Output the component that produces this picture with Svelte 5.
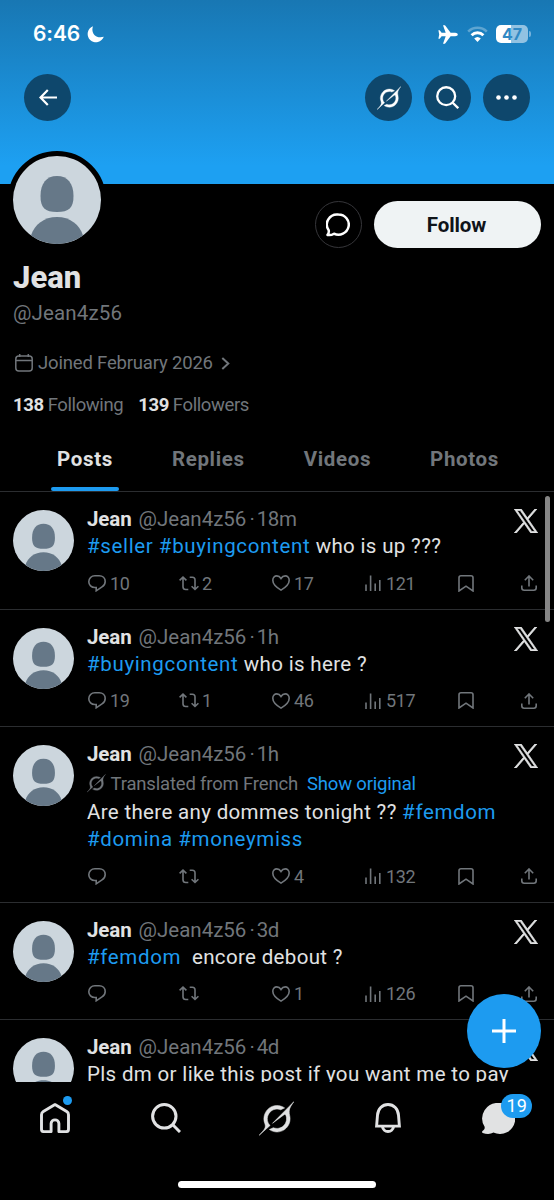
<script lang="ts">
	type Part = { text: string; tag?: boolean };
	type Post = {
		age: string;
		translated?: boolean;
		body: Part[];
		replies?: string;
		reposts?: string;
		likes?: string;
		views?: string;
	};

	const tabs = ['Posts', 'Replies', 'Videos', 'Photos'];
	let activeTab = $state('Posts');

	const posts: Post[] = [
		{
			age: '18m',
			body: [
				{ text: '#seller', tag: true },
				{ text: ' ' },
				{ text: '#buyingcontent', tag: true },
				{ text: ' who is up ???' },
			],
			replies: '10',
			reposts: '2',
			likes: '17',
			views: '121',
		},
		{
			age: '1h',
			body: [{ text: '#buyingcontent', tag: true }, { text: ' who is here ?' }],
			replies: '19',
			reposts: '1',
			likes: '46',
			views: '517',
		},
		{
			age: '1h',
			translated: true,
			body: [
				{ text: 'Are there any dommes tonight ?? ' },
				{ text: '#femdom', tag: true },
				{ text: '\n' },
				{ text: '#domina', tag: true },
				{ text: ' ' },
				{ text: '#moneymiss', tag: true },
			],
			likes: '4',
			views: '132',
		},
		{
			age: '3d',
			body: [{ text: '#femdom', tag: true }, { text: '  encore debout ?' }],
			likes: '1',
			views: '126',
		},
		{
			age: '4d',
			body: [{ text: 'Pls dm or like this post if you want me to pay' }],
		},
	];
</script>

{#snippet grok(size: number)}
	<svg width={size} height={size} viewBox="0 0 33 32" fill="currentColor" stroke="currentColor" stroke-width=".5">
		<path
			d="M12.745 20.54l10.97-8.19c.539-.4 1.307-.244 1.564.38 1.349 3.288.746 7.241-1.938 9.955-2.683 2.714-6.417 3.31-9.83 1.954l-3.728 1.745c5.347 3.697 11.84 2.782 15.898-1.324 3.219-3.255 4.216-7.692 3.284-11.693l.008.009c-1.351-5.878.332-8.227 3.782-13.031L33 0l-4.54 4.59v-.014L12.743 20.544m-2.263 1.987c-3.837-3.707-3.175-9.446.1-12.755 2.42-2.449 6.388-3.448 9.852-1.979l3.72-1.737c-.67-.49-1.53-1.017-2.515-1.387-4.455-1.854-9.789-.931-13.41 2.728-3.483 3.523-4.579 8.94-2.697 13.561 1.405 3.454-.899 5.898-3.22 8.364C1.49 30.2.666 31.074 0 32l10.478-9.466"
		/>
	</svg>
{/snippet}

{#snippet person(size: number)}
	<svg class="person" width={size} height={size} viewBox="0 0 88 88">
		<circle cx="44" cy="44" r="44" fill="#ccd6dd" />
		<path
			d="M44 20c10.500 0 16.500 7.500 16.500 20C60.500 52 56 56 44 56S27.500 52 27.500 40C27.500 27.500 33.500 20 44 20z"
			fill="#667888"
		/>
		<path d="M18 79.500C21.500 68.500 31 61 44 61s22.500 7.500 26 18.500A44 44 0 0 1 18 79.500z" fill="#667888" />
	</svg>
{/snippet}

{#snippet search(size: number, weight: number)}
	<svg width={size} height={size} viewBox="0 0 30 30" fill="none" stroke="currentColor" stroke-width={weight}>
		<circle cx="13.300" cy="13.300" r="11.700" />
		<path d="M21.800 21.800l7.200 7.200" />
	</svg>
{/snippet}

<div class="screen">
	<header class="banner">
		<div class="status">
			<span class="clock">6:46</span>
			<svg class="moon" width="17" height="17" viewBox="0 0 17 17" fill="#fff">
				<path d="M6 .2A8.300 8.300 0 1 0 16.800 10.700C13 11.800 9.500 11 7.400 8.900 5.200 6.600 4.900 3.200 6 .2z" />
			</svg>
			<div class="signals">
				<svg width="20" height="19" viewBox="0 0 20 19" fill="#fff">
					<path
						d="M19.800 9.500c0-1-1.200-1.700-2.600-1.700h-4.600L7.400.8C7 .3 6.700.2 6.200.2H5l2.700 7.600H3.600L1.700 5.300H.4l.8 4.200-.8 4.200h1.300l1.900-2.500h4.100L5 18.800h1.200c.5 0 .8-.1 1.200-.6l5.200-7h4.600c1.400 0 2.600-.7 2.600-1.700z"
					/>
				</svg>
				<svg width="21" height="16" viewBox="0 0 21 16" fill="none" stroke="#fff">
					<path d="M1.200 5.600a13.300 13.300 0 0 1 18.600 0" stroke-width="2.600" opacity=".3" />
					<path d="M4.600 9.200a8.400 8.400 0 0 1 11.800 0" stroke-width="2.900" />
					<path d="M10.500 16l-3.300-3.500a4.800 4.800 0 0 1 6.600 0z" fill="#fff" stroke="none" />
				</svg>
				<div class="battery">47</div>
				<i class="nub"></i>
			</div>
		</div>
		<nav class="controls">
			<button type="button" class="round" aria-label="Back">
				<svg width="18" height="17" viewBox="0 0 18 17" fill="none" stroke="currentColor" stroke-width="2.200">
					<path d="M8.800 1L1.500 8.500l7.300 7.500M1.700 8.500H18" />
				</svg>
			</button>
			<span class="spacer"></span>
			<button type="button" class="round" aria-label="Grok">{@render grok(24)}</button>
			<button type="button" class="round" aria-label="Search">{@render search(23, 3)}</button>
			<button type="button" class="round" aria-label="More">
				<svg width="21" height="5" viewBox="0 0 21 5" fill="currentColor">
					<circle cx="2.500" cy="2.500" r="2.300" /><circle cx="10.500" cy="2.500" r="2.300" /><circle cx="18.500" cy="2.500" r="2.300" />
				</svg>
			</button>
		</nav>
	</header>

	<section class="profile">
		<div class="top">
			<div class="portrait">{@render person(88)}</div>
			<span class="spacer"></span>
			<button type="button" class="message" aria-label="Message">
				<svg width="24" height="24" viewBox="0 0 24 24" fill="none" stroke="currentColor" stroke-width="2.500" stroke-linejoin="round">
					<path d="M12.400 1.500a10.300 10.100 0 1 1-4.400 19.200c-2 1.200-4.300 1.600-6.500 1.200 1.300-1.400 1.500-2.900 1.200-4.600A10.300 10.100 0 0 1 12.400 1.500z" />
				</svg>
			</button>
			<button type="button" class="follow">Follow</button>
		</div>
		<h1>Jean</h1>
		<p class="handle">@Jean4z56</p>
		<p class="joined">
			<svg width="18" height="18" viewBox="0 0 18 18" fill="none" stroke="currentColor" stroke-width="1.500">
				<rect x=".8" y="2" width="16.400" height="15" rx="3" />
				<path d="M1 6.500h16M4.700 0v3M13.300 0v3" />
			</svg>
			<span>Joined February 2026</span>
			<svg class="chevron" width="9" height="13" viewBox="0 0 9 13" fill="none" stroke="currentColor" stroke-width="2">
				<path d="M1.300 1l6 5.500-6 5.500" />
			</svg>
		</p>
		<p class="counts">
			<b>138</b><span class="following">Following</span>
			<b>139</b><span class="followers">Followers</span>
		</p>
	</section>

	<nav class="tabs">
		{#each tabs as tab}
			<button type="button" class:active={tab === activeTab} onclick={() => (activeTab = tab)}>{tab}</button>
		{/each}
	</nav>

	<main class="feed">
		{#each posts as post}
			<article>
				{@render person(61)}
				<div class="content">
					<div class="byline">
						<b>Jean</b><span class="user">@Jean4z56</span><span class="sep">·</span><span class="age">{post.age}</span>
					</div>
					{#if post.translated}
						<div class="translated">
							{@render grok(18.500)}
							<span>Translated from French</span>
							<a href="#original">Show original</a>
						</div>
					{/if}
					<div class="body">{#each post.body as part}{#if part.tag}<span class="tag">{part.text}</span>{:else}{part.text}{/if}{/each}</div>
					<div class="actions">
						<span class="reply">
							<svg width="18" height="17" viewBox="0 0 18 17">
								<path d="M6.800.8h4.400c3.500 0 6 2.500 6 5.700 0 2.300-1.200 4.200-3.200 5.400l-5.800 3.900v-3.300H6.800C3.400 12.500.8 10 .8 6.700S3.400.8 6.800.8z" />
							</svg>
							{post.replies ?? ''}
						</span>
						<span class="repost">
							<svg width="20" height="15" viewBox="0 0 20 15">
								<path d="M.6 4.400L4 1.100l3.400 3.300M4 1.500v9.300c0 1.700.8 2.700 2.700 2.700h2.600M19.400 10.200L16 13.500l-3.400-3.300M16 13.200V4c0-1.700-.8-2.700-2.700-2.700h-2.600" />
							</svg>
							{post.reposts ?? ''}
						</span>
						<span class="like">
							<svg width="18" height="16" viewBox="0 0 18 16">
								<path d="M9 15.100C4.500 12.400.8 8.900.8 5.200.8 2.700 2.600.9 4.800.9 6.600.9 8 1.900 9 3.500 10 1.900 11.400.9 13.200.9c2.200 0 4 1.800 4 4.300 0 3.700-3.700 7.200-8.200 9.900z" />
							</svg>
							{post.likes ?? ''}
						</span>
						<span class="views">
							<svg width="16" height="16" viewBox="0 0 16 16">
								<path d="M1 16V9.500M5.600 16V.5M10.200 16V8.500M14.800 16V5" />
							</svg>
							{post.views ?? ''}
						</span>
						<span class="bookmark">
							<svg width="16" height="17" viewBox="0 0 16 17">
								<path d="M1 16V2.800C1 1.600 1.700.8 3 .8h10c1.300 0 2 .8 2 2V16l-7-4.800z" />
							</svg>
						</span>
						<span class="share">
							<svg width="16" height="16" viewBox="0 0 16 16">
								<path d="M8 11.500V1.200M3.800 5.200L8 1l4.200 4.200M.8 10.500v2.300c0 1.600.8 2.400 2.400 2.400h9.600c1.600 0 2.400-.8 2.400-2.400v-2.300" />
							</svg>
						</span>
					</div>
				</div>
				<svg class="xmark" width="24" height="24" viewBox="0 0 1200 1227" fill="currentColor">
					<path
						d="M714.163 519.284L1160.890 0H1055.030L667.137 450.887L357.328 0H0L468.492 681.821L0 1226.370H105.866L515.491 750.218L842.672 1226.370H1200L714.137 519.284ZM569.165 687.828L521.697 619.934L144.011 79.694H306.615L611.412 515.685L658.880 583.579L1055.080 1150.300H892.476L569.165 687.854Z"
						stroke="currentColor"
						stroke-width="36"
					/>
				</svg>
			</article>
		{/each}
	</main>

	<i class="scrollbar"></i>
	<button type="button" class="compose" aria-label="New post">
		<svg width="24" height="24" viewBox="0 0 24 24" fill="none" stroke="#fff" stroke-width="3">
			<path d="M12 0v24M0 12h24" />
		</svg>
	</button>

	<footer>
		<div class="dock">
			<span>
				<svg width="30" height="30" viewBox="0 0 30 30" fill="none" stroke="currentColor" stroke-width="2.900" stroke-linejoin="round">
					<path d="M15 1.600L3.300 8.600C2 9.400 1.500 10.300 1.500 11.800v14.400c0 1.600.9 2.400 2.500 2.400h7.100v-8c0-5 7.800-5 7.800 0v8H26c1.600 0 2.500-.8 2.500-2.400V11.800c0-1.500-.5-2.400-1.800-3.200z" />
				</svg>
				<i class="dot"></i>
			</span>
			<span>{@render search(30, 3)}</span>
			<span>{@render grok(35)}</span>
			<span>
				<svg width="28" height="30" viewBox="0 0 28 30" fill="none" stroke="currentColor" stroke-width="2.900">
					<path d="M3.500 12.200C3.900 6 8.200 1.500 14 1.500S24.100 6 24.500 12.200l.9 10.900H2.600zM8.300 23.500c.8 3.300 2.900 5 5.700 5s4.900-1.700 5.700-5" />
				</svg>
			</span>
			<span>
				<svg width="33" height="31" viewBox="0 0 33 31" fill="currentColor">
					<path d="M17 0a15.500 15.500 0 1 1-5.600 29.600c-2.600 1.600-7 1.700-10.700.3-.8-.3-.9-1.200-.2-1.800 1.800-1.500 2.600-2.800 2-4.600A15.500 15.500 0 0 1 17 0z" />
				</svg>
				<b class="count">19</b>
			</span>
		</div>
		<i class="indicator"></i>
	</footer>
</div>

<style>
	:global(body) {
		background: #000;
	}

	.screen {
		position: relative;
		display: flex;
		flex-direction: column;
		width: 554px;
		height: 1200px;
		overflow: hidden;
		background: #000;
		color: #e1e2e3;
		font-family: Roboto, 'Liberation Sans', sans-serif;
		font-size: 20.5px;
	}

	h1,
	p {
		margin: 0;
	}

	svg {
		display: block;
		flex: none;
	}

	button {
		padding: 0;
		border: 0;
		font: inherit;
		color: inherit;
		background: none;
		cursor: pointer;
	}

	.spacer {
		flex: 1;
	}

	.banner {
		flex: none;
		box-sizing: border-box;
		height: 184px;
		padding: 20px 24px 0;
		background: linear-gradient(#1877b3, #1da0f2 90%);
	}

	.status {
		display: flex;
		align-items: center;
		height: 28px;
		padding-left: 9px;
		color: #fff;
	}

	.clock {
		width: 54px;
		font: 600 21px/28px Inter, sans-serif;
		letter-spacing: -0.1px;
	}

	.signals {
		display: flex;
		align-items: center;
		margin: 0 -1px 0 auto;
	}

	.signals svg + svg {
		margin: 0 8px 0 9px;
	}

	.battery {
		width: 32px;
		height: 18px;
		border-radius: 5px;
		background: linear-gradient(90deg, #fff 47%, #92c2e2 47%);
		font: 700 16px/19px Inter, sans-serif;
		text-align: center;
		color: #3189c4;
	}

	.nub {
		width: 2px;
		height: 6px;
		margin: 0 0 0 1px;
		border-radius: 0 3px 3px 0;
		background: #75b2dc;
	}

	.controls {
		display: flex;
		gap: 12px;
		margin-top: 26px;
	}

	.round {
		display: grid;
		place-items: center;
		width: 47px;
		height: 47px;
		border-radius: 50%;
		background: #0e476c;
		color: #fff;
	}

	.profile {
		flex: none;
		height: 251px;
		padding: 0 13px;
		color: #71767b;
	}

	.top {
		display: flex;
		height: 76px;
	}

	.portrait {
		height: 88px;
		margin: -33px 0 0 -5px;
		border: 5px solid #000;
		border-radius: 50%;
		background: #000;
	}

	.message {
		display: grid;
		place-items: center;
		box-sizing: border-box;
		width: 47px;
		height: 47px;
		margin: 17px 12px 0 0;
		border: 1.5px solid #36363a;
		border-radius: 50%;
		color: #fff;
	}

	.message svg {
		margin-right: 2px;
	}

	.follow {
		width: 167px;
		height: 47px;
		margin-top: 17px;
		padding-right: 2px;
		border-radius: 24px;
		background: #eff3f4;
		color: #0f1419;
		font-weight: 700;
		letter-spacing: -0.1px;
	}

	h1 {
		padding-top: 1px;
		font-size: 31px;
		font-weight: 800;
		line-height: 34px;
		color: #e1e2e3;
	}

	.handle {
		margin-top: 3px;
		line-height: 30px;
		letter-spacing: 0.15px;
	}

	.joined {
		display: flex;
		align-items: center;
		margin-top: 20px;
		padding-left: 2px;
		font-size: 18.5px;
		line-height: 30px;
		letter-spacing: -0.18px;
	}

	.joined span {
		margin: 0 8px 0 5px;
	}

	.counts {
		display: flex;
		margin-top: 12px;
		font-size: 18.5px;
		line-height: 30px;
	}

	.counts b {
		margin-right: 4px;
		letter-spacing: -0.4px;
		color: #e1e2e3;
	}

	.counts span {
		letter-spacing: -0.4px;
	}

	.following {
		margin-right: 15px;
	}

	.tabs {
		display: flex;
		justify-content: space-between;
		flex: none;
		box-sizing: border-box;
		height: 57px;
		padding: 0 49px 0 51px;
		border-bottom: 1px solid #2b2d30;
	}

	.tabs button {
		position: relative;
		box-sizing: border-box;
		height: 56px;
		padding: 0 6px 9px;
		font-weight: 700;
		letter-spacing: 0.65px;
		color: #71767b;
	}

	.tabs .active {
		color: #e1e2e3;
	}

	.tabs .active::after {
		content: '';
		position: absolute;
		right: 0;
		bottom: 0;
		left: 0;
		height: 4px;
		border-radius: 2px;
		background: #1d9bf0;
	}

	.feed {
		flex: 1;
		min-height: 0;
		overflow: hidden;
	}

	article {
		display: flex;
		box-sizing: border-box;
		padding: 18px 16px 16.500px 13px;
		border-bottom: 1px solid #2b2d30;
	}

	.content {
		flex: 1;
		margin: -4px 0 0 13px;
	}

	.byline {
		display: flex;
		line-height: 27px;
		color: #71767b;
		white-space: nowrap;
	}

	.byline b {
		color: #e1e2e3;
		letter-spacing: -0.1px;
	}

	.user {
		margin: 0 3px 0 7px;
	}

	.sep {
		margin-right: 2px;
	}

	.age {
		letter-spacing: -0.4px;
	}

	.translated {
		display: flex;
		align-items: center;
		height: 31px;
		font-size: 18.5px;
		letter-spacing: -0.18px;
		color: #71767b;
	}

	.translated span {
		margin: 0 9px 0 5px;
	}

	a,
	.tag {
		color: #1d9bf0;
		text-decoration: none;
	}

	.body {
		line-height: 27px;
		letter-spacing: 0.34px;
		white-space: pre;
	}

	.tag {
		letter-spacing: 0.65px;
	}

	.actions {
		display: flex;
		align-items: center;
		height: 17.500px;
		margin: 14.500px -24px 0 1px;
		font-size: 18px;
		line-height: 17px;
		letter-spacing: -0.4px;
		color: #71767b;
	}

	.actions span {
		display: flex;
		align-items: center;
		gap: 4px;
	}

	.actions svg {
		fill: none;
		stroke: currentColor;
		stroke-width: 1.6px;
	}

	.reply {
		width: 91px;
	}

	.actions .repost {
		width: 93px;
		gap: 3px;
	}

	.like {
		width: 93px;
	}

	.actions .views {
		width: 93px;
		gap: 5px;
	}

	.bookmark {
		width: 63px;
	}

	.xmark {
		margin-top: -1px;
		color: #e1e2e3;
	}

	.scrollbar {
		position: absolute;
		top: 496px;
		left: 545px;
		width: 5px;
		height: 126px;
		border-radius: 3px;
		background: #858585;
	}

	.compose {
		position: absolute;
		left: 467px;
		top: 994px;
		display: grid;
		place-items: center;
		width: 74px;
		height: 74px;
		border-radius: 50%;
		background: #1d9bf0;
	}

	footer {
		flex: none;
		display: flex;
		flex-direction: column;
		justify-content: space-between;
		align-items: center;
		box-sizing: border-box;
		height: 118px;
		padding-bottom: 12px;
		background: #000;
	}

	.dock {
		display: flex;
		width: 554px;
		height: 72px;
	}

	.dock span {
		position: relative;
		flex: 1;
		display: grid;
		place-items: center;
	}

	.dot {
		position: absolute;
		left: 63px;
		top: 14px;
		width: 9px;
		height: 9px;
		border-radius: 50%;
		background: #1d9bf0;
	}

	.count {
		position: absolute;
		left: 58px;
		top: 12px;
		width: 31px;
		height: 24px;
		border-radius: 12px;
		background: #1d9bf0;
		font-size: 18px;
		font-weight: 400;
		line-height: 24px;
		text-align: center;
		color: #fff;
	}

	.indicator {
		width: 198px;
		height: 7px;
		border-radius: 4px;
		background: #fff;
	}
</style>
